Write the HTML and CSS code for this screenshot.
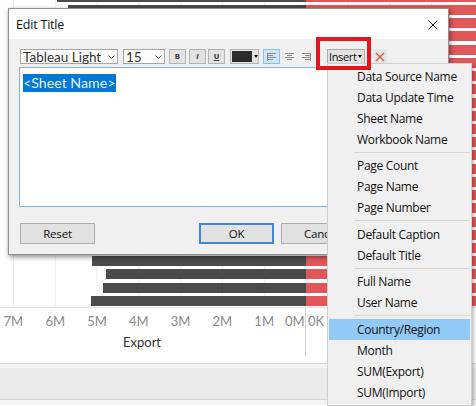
FILE: index.html
```html
<!DOCTYPE html>
<html>
<head>
<meta charset="utf-8">
<title>Edit Title</title>
<link rel="stylesheet" href="styles.css">
</head>
<body>
<div class="sheet">
  <div class="pane">
    <div class="row first"><div class="exp"><div class="bar dark" style="width:249px"></div></div><div class="imp"><div class="bar red" style="width:190px"></div></div></div>
    <div class="row"><div class="exp"><div class="bar dark" style="width:238px"></div></div><div class="imp"><div class="bar red" style="width:190px"></div></div></div>
    <div class="row"><div class="exp"><div class="bar dark" style="width:230px"></div></div><div class="imp"><div class="bar red" style="width:190px"></div></div></div>
    <div class="row"><div class="exp"><div class="bar dark" style="width:226px"></div></div><div class="imp"><div class="bar red" style="width:190px"></div></div></div>
    <div class="row"><div class="exp"><div class="bar dark" style="width:222px"></div></div><div class="imp"><div class="bar red" style="width:190px"></div></div></div>
    <div class="row"><div class="exp"><div class="bar dark" style="width:218px"></div></div><div class="imp"><div class="bar red" style="width:190px"></div></div></div>
    <div class="row"><div class="exp"><div class="bar dark" style="width:215px"></div></div><div class="imp"><div class="bar red" style="width:190px"></div></div></div>
    <div class="row"><div class="exp"><div class="bar dark" style="width:212px"></div></div><div class="imp"><div class="bar red" style="width:190px"></div></div></div>
    <div class="row"><div class="exp"><div class="bar dark" style="width:210px"></div></div><div class="imp"><div class="bar red" style="width:190px"></div></div></div>
    <div class="row"><div class="exp"><div class="bar dark" style="width:208px"></div></div><div class="imp"><div class="bar red" style="width:190px"></div></div></div>
    <div class="row"><div class="exp"><div class="bar dark" style="width:206px"></div></div><div class="imp"><div class="bar red" style="width:190px"></div></div></div>
    <div class="row"><div class="exp"><div class="bar dark" style="width:205px"></div></div><div class="imp"><div class="bar red" style="width:190px"></div></div></div>
    <div class="row"><div class="exp"><div class="bar dark" style="width:204px"></div></div><div class="imp"><div class="bar red" style="width:190px"></div></div></div>
    <div class="row"><div class="exp"><div class="bar dark" style="width:210px"></div></div><div class="imp"><div class="bar red" style="width:190px"></div></div></div>
    <div class="row"><div class="exp"><div class="bar dark" style="width:212px"></div></div><div class="imp"><div class="bar red" style="width:190px"></div></div></div>
    <div class="row"><div class="exp"><div class="bar dark" style="width:214px"></div></div><div class="imp"><div class="bar red" style="width:190px"></div></div></div>
    <div class="row"><div class="exp"><div class="bar dark" style="width:216px"></div></div><div class="imp"><div class="bar red" style="width:190px"></div></div></div>
    <div class="row"><div class="exp"><div class="bar dark" style="width:218px"></div></div><div class="imp"><div class="bar red" style="width:190px"></div></div></div>
    <div class="row"><div class="exp"><div class="bar dark" style="width:216px"></div></div><div class="imp"><div class="bar red" style="width:190px"></div></div></div>
    <div class="row"><div class="exp"><div class="bar dark" style="width:212px"></div></div><div class="imp"><div class="bar red" style="width:190px"></div></div></div>
    <div class="row"><div class="exp"><div class="bar dark" style="width:214px"></div></div><div class="imp"><div class="bar red" style="width:190px"></div></div></div>
    <div class="row"><div class="exp"><div class="bar dark" style="width:200px"></div></div><div class="imp"><div class="bar red" style="width:190px"></div></div></div>
    <div class="row"><div class="exp"><div class="bar dark" style="width:203px"></div></div><div class="imp"><div class="bar red" style="width:190px"></div></div></div>
    <div class="row"><div class="exp"><div class="bar dark" style="width:215px"></div></div><div class="imp"><div class="bar red" style="width:190px"></div></div></div>
  </div>
  <div class="axis">
    <div class="axis-exp">
      <div class="ticks"><span>7M</span><span>6M</span><span>5M</span><span>4M</span><span>3M</span><span>2M</span><span>1M</span><span class="zero">0M</span></div>
      <div class="axis-title">Export</div>
    </div>
    <div class="axis-imp">
      <div class="ticks"><span class="zerok">0K</span></div>
    </div>
  </div>
  <div class="footer"><div class="band"></div></div>
</div>

<div class="dialog">
  <div class="titlebar">
    <span class="ttl">Edit Title</span>
    <svg class="close" width="10" height="10" viewBox="0 0 10 10"><path d="M0.5 0.5L9.5 9.5M9.5 0.5L0.5 9.5" stroke="#222" stroke-width="1" fill="none"/></svg>
  </div>
  <div class="dbody">
    <div class="toolbar">
      <div class="select font"><span>Tableau Light</span><svg class="chev" width="7" height="4" viewBox="0 0 7 4"><path d="M0.5 0.5L3.5 3.5L6.5 0.5" stroke="#555" fill="none"/></svg></div>
      <div class="select size"><span>15</span><svg class="chev" width="7" height="4" viewBox="0 0 7 4"><path d="M0.5 0.5L3.5 3.5L6.5 0.5" stroke="#555" fill="none"/></svg></div>
      <div class="tb tb-b">B</div>
      <div class="tb tb-i">I</div>
      <div class="tb tb-u">U</div>
      <div class="color"><span class="swatch"></span><span class="tri"></span></div>
      <div class="align on"><svg width="9" height="8" viewBox="0 0 9 8"><path d="M0 0.5H9M0 2.5H6M0 4.5H9M0 6.5H6" stroke="#8a8a8a"/><path d="M0.5 0V8" stroke="#8a8a8a"/></svg></div>
      <div class="align"><svg width="9" height="8" viewBox="0 0 9 8"><path d="M0 0.5H9M2 2.5H7M0 4.5H9M2 6.5H7" stroke="#8a8a8a"/></svg></div>
      <div class="align"><svg width="9" height="8" viewBox="0 0 9 8"><path d="M0 0.5H9M3 2.5H9M0 4.5H9M3 6.5H9" stroke="#8a8a8a"/><path d="M8.5 0V8" stroke="#8a8a8a"/></svg></div>
      <div class="insert"><span>Insert</span><span class="tri"></span></div>
      <div class="clear"><svg width="10" height="10" viewBox="0 0 10 10"><path d="M1 1L9 9M9 1L1 9" stroke="#d4603f" stroke-width="1.4" fill="none"/></svg></div>
    </div>
    <div class="editor"><span class="sel">&lt;Sheet Name&gt;</span></div>
    <div class="buttons">
      <div class="btn">Reset</div>
      <div class="grp">
        <div class="btn def">OK</div>
        <div class="btn cancel">Cancel</div>
        <div class="btn"></div>
      </div>
    </div>
  </div>
</div>

<div class="menu">
  <div class="item">Data Source Name</div>
  <div class="item">Data Update Time</div>
  <div class="item">Sheet Name</div>
  <div class="item">Workbook Name</div>
  <div class="sep"></div>
  <div class="item">Page Count</div>
  <div class="item">Page Name</div>
  <div class="item">Page Number</div>
  <div class="sep"></div>
  <div class="item">Default Caption</div>
  <div class="item">Default Title</div>
  <div class="sep"></div>
  <div class="item">Full Name</div>
  <div class="item">User Name</div>
  <div class="sep"></div>
  <div class="item hot">Country/Region</div>
  <div class="item">Month</div>
  <div class="item">SUM(Export)</div>
  <div class="item">SUM(Import)</div>
</div>

<div class="callout"></div>
</body>
</html>
```

FILE: styles.css
```css
html, body {
  margin: 0;
  padding: 0;
}
body {
  width: 476px;
  height: 406px;
  overflow: hidden;
  position: relative;
  background: #ffffff;
  font-family: "Open Sans", "Noto Sans", sans-serif;
}

/* ---------- background worksheet ---------- */
.sheet {
  display: flex;
  flex-direction: column;
  width: 476px;
}
.pane {
  height: 307px;
  overflow: hidden;
  display: flex;
  flex-direction: column;
  background-image: linear-gradient(to right, #eeeeee 1px, transparent 1px);
  background-size: 41.8px 100%;
  background-position: 13px 0;
}
.row {
  flex: 0 0 13.23px;
  display: flex;
}
.row.first {
  margin-top: -8.2px;
}
.exp {
  width: 306px;
  display: flex;
  justify-content: flex-end;
}
.imp {
  flex: 1;
  display: flex;
  overflow: hidden;
}
.bar {
  height: 10px;
  flex: none;
}
.dark { background: #4b4b4b; }
.red { background: #e15759; }

.axis {
  display: flex;
  height: 48px;
  border-top: 1px solid #e3e3e3;
  font-family: Lato, "Open Sans", sans-serif;
}
.axis-exp {
  width: 306px;
  border-right: 1px solid #d4d4d4;
  box-sizing: border-box;
}
.axis-imp {
  flex: 1;
}
.ticks {
  display: flex;
  padding-top: 5px;
  height: 16px;
  line-height: 16px;
  font-size: 13px;
  color: #8a8a8a;
}
.axis-exp .ticks span {
  flex: 0 0 41.8px;
  text-align: center;
}
.axis-exp .ticks span:first-child {
  margin-left: -7.5px;
}
.axis-exp .ticks span.zero {
  flex: none;
  margin-left: auto;
  padding-right: 2px;
}
.axis-imp .ticks span.zerok {
  padding-left: 2px;
}
.axis-title {
  margin-top: 5px;
  line-height: 16px;
  font-size: 13px;
  color: #333;
  padding-left: 123px;
}
.footer {
  margin-top: 7px;
  border-top: 1px solid #d9d9d9;
  background: #f4f4f4;
  height: 42px;
  padding-top: 4px;
  box-sizing: border-box;
}
.band {
  height: 31px;
  background: #ebebeb;
  border-bottom: 1px solid #d6d6d6;
}

/* ---------- dialog ---------- */
.dialog {
  position: absolute;
  left: 8px;
  top: 8px;
  width: 441px;
  box-sizing: border-box;
  border: 1px solid #8f8f8f;
  background: #f0f0f0;
  box-shadow: 1px 2px 5px rgba(0, 0, 0, 0.45);
}
.titlebar {
  height: 30px;
  background: #ffffff;
  display: flex;
  align-items: center;
  justify-content: space-between;
  padding: 0 10px 0 7px;
}
.ttl {
  font-size: 12.5px;
  letter-spacing: -0.2px;
  color: #111;
  padding-top: 1px;
}
.close {
  display: block;
  margin-top: 1px;
}
.dbody {
  padding: 10px 10px 10px 10px;
}
.toolbar {
  display: flex;
  align-items: center;
  height: 15px;
  padding-left: 1px;
}
.select {
  height: 15px;
  box-sizing: border-box;
  border: 1px solid #a6a6a6;
  background: #ffffff;
  display: flex;
  align-items: center;
  justify-content: space-between;
  padding: 0 2px 0 2px;
  font-family: Lato, "Open Sans", sans-serif;
  font-size: 13.5px;
  color: #333;
  line-height: 13px;
}
.select span {
  padding-top: 1px;
}
.select.font { width: 98px; }
.select.size { width: 42px; margin-left: 5px; }
.chev { display: block; }
.tb {
  width: 17px;
  height: 15px;
  box-sizing: border-box;
  border: 1px solid #b4b4b4;
  background: #e2e2e2;
  font-family: "DejaVu Sans", sans-serif;
  font-size: 7px;
  font-weight: bold;
  color: #444;
  display: flex;
  align-items: center;
  justify-content: center;
}
.tb-b { margin-left: 4px; }
.tb-i { margin-left: 3px; font-style: italic; }
.tb-u { margin-left: 2px; text-decoration: underline; }
.color {
  margin-left: 5px;
  width: 29px;
  height: 15px;
  box-sizing: border-box;
  border: 1px solid #b4b4b4;
  background: #e2e2e2;
  display: flex;
  align-items: center;
  padding-left: 1px;
}
.swatch {
  width: 20px;
  height: 11px;
  background: #2b2b2b;
}
.tri {
  width: 0;
  height: 0;
  border-left: 2.5px solid transparent;
  border-right: 2.5px solid transparent;
  border-top: 3px solid #111;
  margin-left: 2px;
}
.align {
  width: 16px;
  height: 15px;
  box-sizing: border-box;
  margin-left: 1px;
  display: flex;
  align-items: center;
  justify-content: center;
  border: 1px solid transparent;
}
.align.on {
  width: 17px;
  margin-left: 4px;
  background: #cde6f7;
  border-color: #8ebfe6;
}
.align svg { display: block; }
.insert {
  margin-left: 13px;
  width: 38px;
  height: 15px;
  box-sizing: border-box;
  border: 1px solid #adadad;
  background: #e1e1e1;
  display: flex;
  align-items: center;
  padding-left: 1px;
  font-size: 11px;
  letter-spacing: -0.35px;
  color: #111;
  white-space: nowrap;
}
.insert .tri { margin-left: 1px; }
.clear {
  margin-left: 8px;
  width: 14px;
  height: 15px;
  box-sizing: border-box;
  background: #e6e6e6;
  display: flex;
  align-items: center;
  justify-content: center;
}
.editor {
  margin-top: 3px;
  height: 140px;
  box-sizing: border-box;
  border: 1px solid #7fb3e3;
  background: #ffffff;
  padding: 3px;
}
.sel {
  display: inline-block;
  background: #0078d7;
  color: #eaf4ff;
  font-family: Lato, "Open Sans", sans-serif;
  font-size: 14.2px;
  line-height: 18px;
  padding-right: 1px;
}
.buttons {
  margin-top: 16px;
  display: flex;
  justify-content: space-between;
  padding-left: 1px;
}
.grp {
  display: flex;
  gap: 7px;
}
.btn {
  width: 75px;
  height: 21px;
  box-sizing: border-box;
  border: 1px solid #adadad;
  background: #e1e1e1;
  font-size: 11.5px;
  letter-spacing: -0.2px;
  color: #111;
  display: flex;
  align-items: center;
  justify-content: center;
}
.btn.def {
  border: 2px solid #3d87d3;
}
.btn.cancel {
  justify-content: flex-start;
  padding-left: 22px;
}

/* ---------- insert menu ---------- */
.menu {
  position: absolute;
  left: 327px;
  top: 62.5px;
  width: 145px;
  box-sizing: border-box;
  border: 1px solid #cfcfcf;
  background: #f0f0f0;
  padding: 2px 1px;
  box-shadow: 2px 2px 3px rgba(0, 0, 0, 0.25);
  z-index: 2;
}
.item {
  height: 21px;
  line-height: 21px;
  padding-left: 28px;
  font-size: 12px;
  letter-spacing: -0.3px;
  color: #111;
  white-space: nowrap;
}
.item.hot {
  background: #91c9f7;
}
.sep {
  height: 5.5px;
  display: flex;
  align-items: center;
  padding-left: 25px;
}
.sep::after {
  content: "";
  flex: 1;
  height: 1px;
  background: #d7d7d7;
}

/* ---------- red annotation ---------- */
.callout {
  position: absolute;
  left: 316px;
  top: 37px;
  width: 55px;
  height: 33px;
  box-sizing: border-box;
  border: 4px solid #e3161d;
  z-index: 3;
}
```
